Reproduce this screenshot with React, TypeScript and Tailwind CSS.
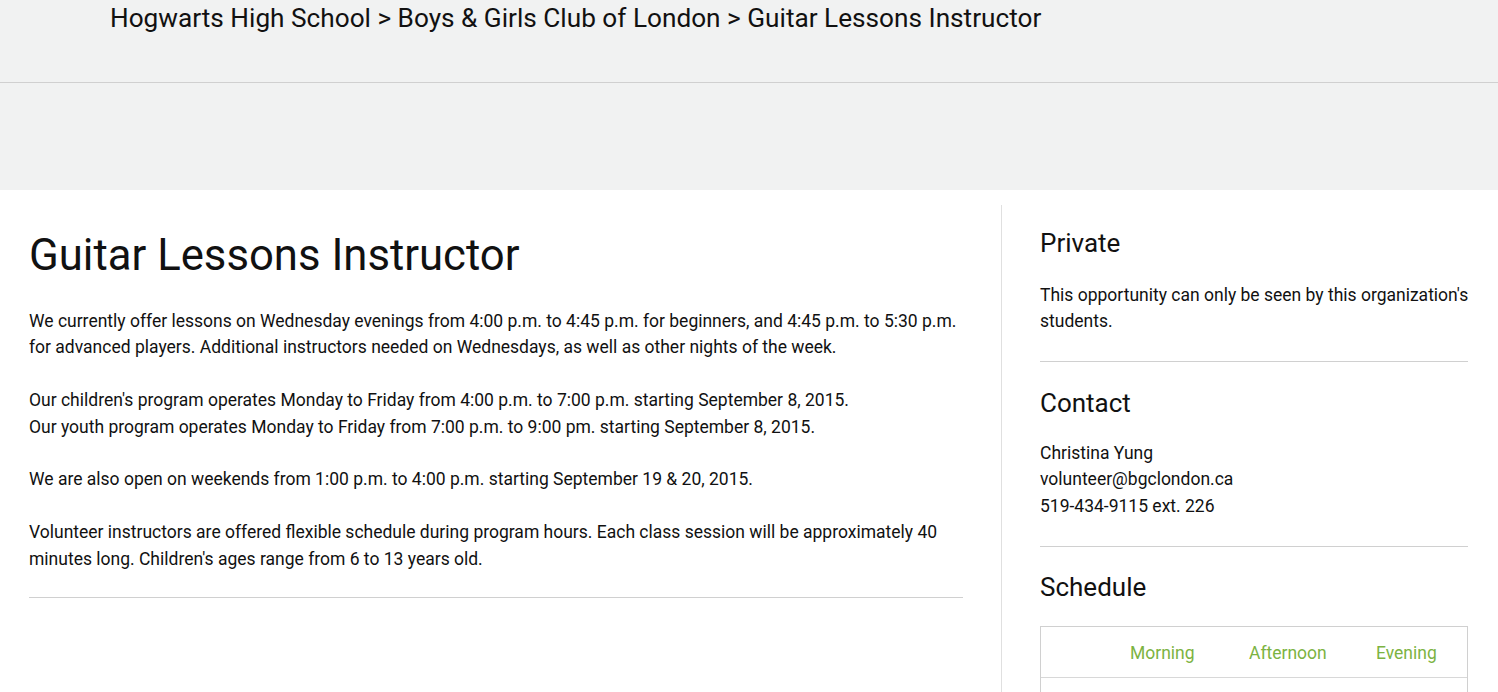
import React from "react";

export default function App() {
  const font = { fontFamily: "Roboto, 'Noto Sans', sans-serif" };
  return (
    <div className="min-h-[692px] bg-white text-[#111]" style={font}>
      <div className="bg-[#f1f2f2]">
        <div className="h-[83px] border-b border-[#d0d0d0] pl-[110px] pt-[3px]">
          <div className="text-[26.2px] leading-[31px] text-[#111]">
            Hogwarts High School &gt; Boys &amp; Girls Club of London &gt; Guitar Lessons Instructor
          </div>
        </div>
        <div className="h-[107px]" />
      </div>
      <div className="flex pt-[15px]">
        <div className="w-[1001px] pl-[29px] pr-[38px] pt-[22px]">
          <h1 className="text-[43.7px] leading-[56px] font-normal">Guitar Lessons Instructor</h1>
          <div className="mt-[25px] text-[17.5px] leading-[26.4px] pb-[25px] border-b border-[#d0d0d0]">
            <p>
              We currently offer lessons on Wednesday evenings from 4:00 p.m. to 4:45 p.m. for beginners, and 4:45 p.m. to 5:30 p.m. for advanced players. Additional instructors needed on Wednesdays, as well as other nights of the week.
            </p>
            <p className="mt-[26.4px]">
              Our children's program operates Monday to Friday from 4:00 p.m. to 7:00 p.m. starting September 8, 2015.
              <br />
              Our youth program operates Monday to Friday from 7:00 p.m. to 9:00 pm. starting September 8, 2015.
            </p>
            <p className="mt-[26.4px]">
              We are also open on weekends from 1:00 p.m. to 4:00 p.m. starting September 19 &amp; 20, 2015.
            </p>
            <p className="mt-[26.4px]">
              Volunteer instructors are offered flexible schedule during program hours. Each class session will be approximately 40 minutes long. Children's ages range from 6 to 13 years old.
            </p>
          </div>
        </div>
        <div className="flex-1 border-l border-[#e0e0e0] pl-[38px] pr-[30px] pt-[22px] min-h-[487px]">
          <div className="border-b border-[#d0d0d0] pb-[26px]">
            <h2 className="text-[26px] leading-[32px] font-normal">Private</h2>
            <p className="mt-[23px] mr-[-12px] text-[17.5px] leading-[26.4px]">
              This opportunity can only be seen by this organization's students.
            </p>
          </div>
          <div className="border-b border-[#d0d0d0] pb-[27px] pt-[25px]">
            <h2 className="text-[26px] leading-[32px] font-normal">Contact</h2>
            <p className="mt-[21px] text-[17.5px] leading-[26.4px]">
              Christina Yung
              <br />
              volunteer@bgclondon.ca
              <br />
              519-434-9115 ext. 226
            </p>
          </div>
          <div className="pt-[24px]">
            <h2 className="text-[26px] leading-[32px] font-normal">Schedule</h2>
            <div className="mt-[23px] border border-[#d0d0d0]">
              <div className="flex h-[51px] items-center pt-[2px] border-b border-[#d8d8d8] text-[17.5px] text-[#7cb342]">
                <div className="w-[89px]" />
                <div className="w-[119px]">Morning</div>
                <div className="w-[127px]">Afternoon</div>
                <div className="flex-1">Evening</div>
              </div>
              <div className="h-[40px]" />
            </div>
          </div>
        </div>
      </div>
    </div>
  );
}
